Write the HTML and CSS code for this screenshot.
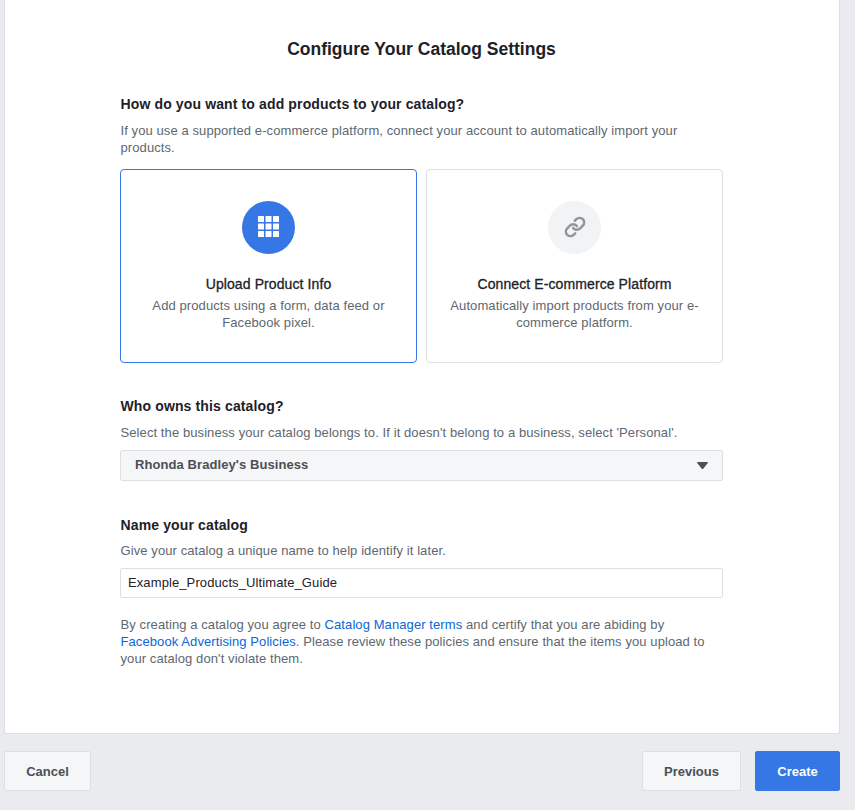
FILE: index.html
```html
<!DOCTYPE html>
<html lang="en">
<head>
<meta charset="utf-8">
<title>Configure Your Catalog Settings</title>
<link rel="stylesheet" href="styles.css">
</head>
<body>
<main class="panel">
  <div class="content">
    <h1 class="title">Configure Your Catalog Settings</h1>

    <h2 class="heading first">How do you want to add products to your catalog?</h2>
    <p class="help">If you use a supported e-commerce platform, connect your account to automatically import your products.</p>

    <div class="cards">
      <div class="card selected">
        <span class="circle circle-blue">
          <svg width="21" height="21" viewBox="0 0 21 21" fill="#fff">
            <rect x="0" y="0" width="6" height="6" rx=".5"/><rect x="7.5" y="0" width="6" height="6" rx=".5"/><rect x="15" y="0" width="6" height="6" rx=".5"/>
            <rect x="0" y="7.5" width="6" height="6" rx=".5"/><rect x="7.5" y="7.5" width="6" height="6" rx=".5"/><rect x="15" y="7.5" width="6" height="6" rx=".5"/>
            <rect x="0" y="15" width="6" height="6" rx=".5"/><rect x="7.5" y="15" width="6" height="6" rx=".5"/><rect x="15" y="15" width="6" height="6" rx=".5"/>
          </svg>
        </span>
        <div class="card-title">Upload Product Info</div>
        <div class="card-text">Add products using a form, data feed or Facebook pixel.</div>
      </div>
      <div class="card">
        <span class="circle circle-grey">
          <svg width="22" height="22" viewBox="0 0 24 24" fill="none" stroke="#90949c" stroke-width="2.7" stroke-linecap="round">
            <path d="M10 13a5 5 0 0 0 7.54.54l3-3a5 5 0 0 0-7.07-7.07l-1.72 1.71"/>
            <path d="M14 11a5 5 0 0 0-7.54-.54l-3 3a5 5 0 0 0 7.07 7.07l1.71-1.71"/>
          </svg>
        </span>
        <div class="card-title">Connect E-commerce Platform</div>
        <div class="card-text">Automatically import products from your e-commerce platform.</div>
      </div>
    </div>

    <h2 class="heading owner">Who owns this catalog?</h2>
    <p class="help">Select the business your catalog belongs to. If it doesn't belong to a business, select 'Personal'.</p>
    <div class="select">
      <span>Rhonda Bradley's Business</span>
      <svg class="caret" width="11" height="7" viewBox="0 0 11 7" fill="#4b4f56"><path d="M.8 0h9.4c.7 0 1 .6.6 1.1L6.4 6.4a1.2 1.2 0 0 1-1.8 0L.2 1.1C-.2.6.1 0 .8 0z"/></svg>
    </div>

    <h2 class="heading name">Name your catalog</h2>
    <p class="help help-tight">Give your catalog a unique name to help identify it later.</p>
    <input class="field" type="text" value="Example_Products_Ultimate_Guide">

    <p class="terms">By creating a catalog you agree to <a href="#">Catalog Manager terms</a> and certify that you are abiding by <a href="#">Facebook Advertising Policies</a>. Please review these policies and ensure that the items you upload to your catalog don't violate them.</p>
  </div>
</main>
<footer class="footer">
  <button class="btn btn-cancel" type="button">Cancel</button>
  <div class="footer-right">
    <button class="btn btn-prev" type="button">Previous</button>
    <button class="btn btn-create" type="button">Create</button>
  </div>
</footer>
</body>
</html>
```
FILE: styles.css
```css
* { box-sizing: border-box; }
html, body { margin: 0; padding: 0; }
body {
  width: 855px;
  height: 810px;
  overflow: hidden;
  background: #e9ebee;
  font-family: "Liberation Sans", Arial, sans-serif;
  color: #1d2129;
}
.panel {
  width: 836px;
  height: 734px;
  margin-left: 4px;
  background: #fff;
  border: 1px solid #dddfe2;
  border-top: 0;
  border-radius: 0 0 3px 3px;
}
.content {
  width: 603px;
  margin-left: 115px;
}
.title {
  margin: 0;
  padding-top: 38px;
  font-size: 17.5px;
  line-height: 22px;
  font-weight: 700;
  text-align: center;
}
.heading {
  margin: 0;
  padding-left: 0.5px;
  font-size: 14px;
  line-height: 18px;
  font-weight: 700;
  letter-spacing: 0.13px;
}
.heading.first { margin-top: 35px; }
.heading.owner { margin-top: 34px; }
.heading.name { margin-top: 35px; }
.help {
  margin: 9px 0 0;
  padding-left: 0.5px;
  font-size: 13px;
  line-height: 17px;
  letter-spacing: 0.09px;
  color: #606770;
}
.help-tight { margin-top: 8px; }
.cards {
  display: flex;
  gap: 9px;
  margin-top: 13px;
}
.card {
  width: 297px;
  height: 194px;
  display: flex;
  flex-direction: column;
  align-items: center;
  padding: 31px 20px 0;
  background: #fff;
  border: 1px solid #dddfe2;
  border-radius: 4px;
  text-align: center;
}
.card.selected { border-color: #3578e5; }
.circle {
  width: 53px;
  height: 53px;
  padding-bottom: 2px;
  border-radius: 50%;
  display: flex;
  align-items: center;
  justify-content: center;
}
.circle-blue { background: #3578e5; }
.circle-grey { background: #f2f3f5; }
.card-title {
  margin-top: 21px;
  font-size: 14px;
  line-height: 18px;
  font-weight: 400;
  letter-spacing: 0.1px;
  -webkit-text-stroke: 0.3px #1d2129;
  color: #1d2129;
}
.card-text {
  margin-top: 4px;
  font-size: 13px;
  line-height: 17px;
  letter-spacing: 0.1px;
  color: #606770;
}
.select {
  display: flex;
  align-items: center;
  justify-content: space-between;
  height: 31px;
  margin-top: 9px;
  padding: 0 14px 2px;
  background: #f5f6f7;
  border: 1px solid #dddfe2;
  border-radius: 2px;
  font-size: 13px;
  font-weight: 700;
  letter-spacing: 0.08px;
  color: #4b4f56;
}
.caret { margin-top: 2px; }
.field {
  display: block;
  width: 100%;
  height: 30px;
  margin-top: 9px;
  padding: 0 7px 2px;
  background: #fff;
  border: 1px solid #dddfe2;
  border-radius: 2px;
  font-family: inherit;
  font-size: 13px;
  letter-spacing: 0.1px;
  color: #1d2129;
}
.terms {
  margin: 18px 0 0;
  padding-left: 0.5px;
  font-size: 13px;
  line-height: 17px;
  letter-spacing: 0.09px;
  color: #606770;
}
.terms a { color: #0a66d8; text-decoration: none; }
.footer {
  display: flex;
  justify-content: space-between;
  width: 836px;
  margin-left: 4px;
  margin-top: 17px;
}
.footer-right { display: flex; gap: 14px; }
.btn {
  height: 40px;
  padding: 0;
  border: 1px solid #dddfe2;
  border-radius: 2px;
  background: #f5f6f7;
  font-family: inherit;
  font-size: 13px;
  font-weight: 700;
  color: #4b4f56;
}
.btn-cancel { width: 87px; }
.btn-prev { width: 99px; }
.btn-create { width: 85px; background: #3578e5; border-color: #3578e5; color: #fff; }
```
